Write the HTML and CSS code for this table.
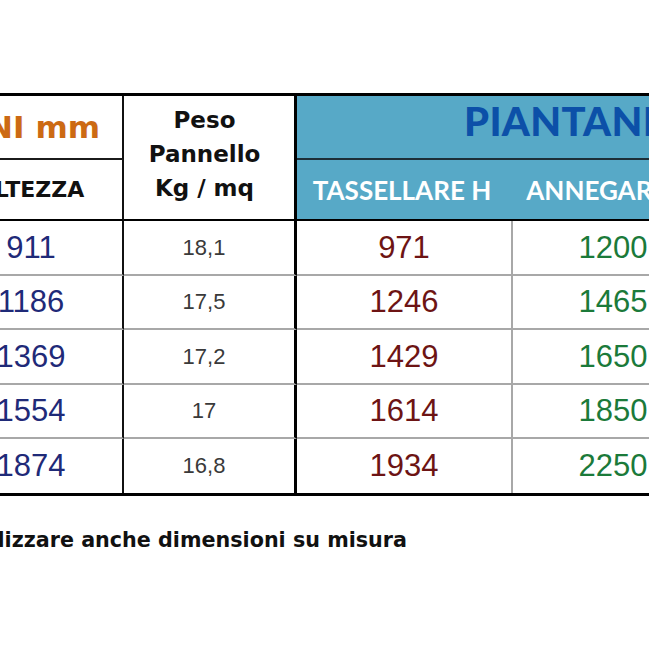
FILE: index.html
```html
<!DOCTYPE html>
<html lang="it">
<head>
<meta charset="utf-8">
<title>Tabella pannelli</title>
<link rel="stylesheet" href="styles.css">
</head>
<body>
<div class="page">
  <div class="sheet">
    <div class="grid">
      <div class="c dim">DIMENSIONI mm</div>
      <div class="c peso">Peso<br>Pannello<br>Kg / mq</div>
      <div class="c pian">PIANTANE</div>
      <div class="c alt">ALTEZZA</div>
      <div class="c sub tass">TASSELLARE H</div>
      <div class="c sub anne">ANNEGARE H</div>

      <div class="c d h">911</div><div class="c d w">18,1</div><div class="c d t">971</div><div class="c d a">1200</div>
      <div class="c d h">1186</div><div class="c d w">17,5</div><div class="c d t">1246</div><div class="c d a">1465</div>
      <div class="c d h">1369</div><div class="c d w">17,2</div><div class="c d t">1429</div><div class="c d a">1650</div>
      <div class="c d h">1554</div><div class="c d w">17</div><div class="c d t">1614</div><div class="c d a">1850</div>
      <div class="c d h last">1874</div><div class="c d w last">16,8</div><div class="c d t last">1934</div><div class="c d a last">2250</div>
    </div>
    <div class="note"><span>È possibile realizzare anche dimensioni su misura</span></div>
  </div>
</div>
</body>
</html>
```
FILE: styles.css
```css
* { box-sizing: border-box; }
html, body { margin: 0; padding: 0; background: #fff; }
body { overflow: hidden; }
.page { width: 649px; height: 649px; overflow: hidden; }
.sheet { margin-left: -60px; padding-top: 93px; width: 800px; }
.grid {
  display: grid;
  grid-template-columns: 184px 173px 216px 200px;
  grid-template-rows: 64px 61px 55px 54px 55px 54px 54px;
  border-top: 3px solid #000;
  border-bottom: 3px solid #000;
  width: 773px;
}
.c { display: flex; align-items: center; justify-content: center; }
.dim {
  grid-column: 1; grid-row: 1;
  justify-content: flex-end;
  padding-right: 22px;
  border-right: 2px solid #111;
  border-bottom: 2px solid #1b1b1b;
  font-family: "DejaVu Sans", sans-serif; font-weight: bold;
  font-size: 31px; color: #cc6a14; white-space: nowrap;
}
.peso {
  grid-column: 2; grid-row: 1 / span 2;
  border-right: 3px solid #000;
  border-bottom: 2px solid #000;
  font-family: "DejaVu Sans", sans-serif; font-weight: bold;
  font-size: 23px; line-height: 34px; color: #111; text-align: center;
  padding-right: 9px; padding-bottom: 8px;
}
.pian {
  grid-column: 3 / span 2; grid-row: 1;
  background: #57a9c7;
  border-bottom: 2px solid #1d2f38;
  justify-content: flex-start;
  padding-left: 167px; padding-bottom: 12px;
  font-family: Lato, sans-serif; font-weight: 900;
  font-size: 40px; letter-spacing: 0.3px; color: #0c50a8; white-space: nowrap;
}
.alt {
  grid-column: 1; grid-row: 2;
  border-right: 2px solid #111;
  border-bottom: 2px solid #000;
  font-family: "DejaVu Sans", sans-serif; font-weight: bold;
  font-size: 22px; color: #111;
}
.sub {
  grid-row: 2;
  background: #57a9c7;
  border-bottom: 2px solid #000;
  font-family: Lato, sans-serif; font-weight: bold;
  font-size: 26px; color: #fff; white-space: nowrap;
}
.tass { padding-right: 6px; }
.anne { padding-right: 6px; }
.d {
  font-family: "Liberation Sans", Arial, sans-serif;
  border-bottom: 2px solid #a8a8a8;
}
.d.last { border-bottom: 0; }
.h { font-size: 31px; color: #1f2a78; border-right: 2px solid #111; }
.w { font-size: 22px; color: #3a3a3a; border-right: 3px solid #000; padding-right: 10px; }
.t { font-size: 31px; color: #6d1414; border-right: 2px solid #a8a8a8; }
.a { font-size: 31px; color: #1b7a3a; }
.note {
  margin-top: 32px;
  width: 467px;
  display: flex;
  justify-content: flex-end;
  white-space: nowrap;
  font-family: "DejaVu Sans", sans-serif; font-weight: bold;
  font-size: 20.7px; line-height: 24px; color: #111;
}
.note span { flex: none; }
```
